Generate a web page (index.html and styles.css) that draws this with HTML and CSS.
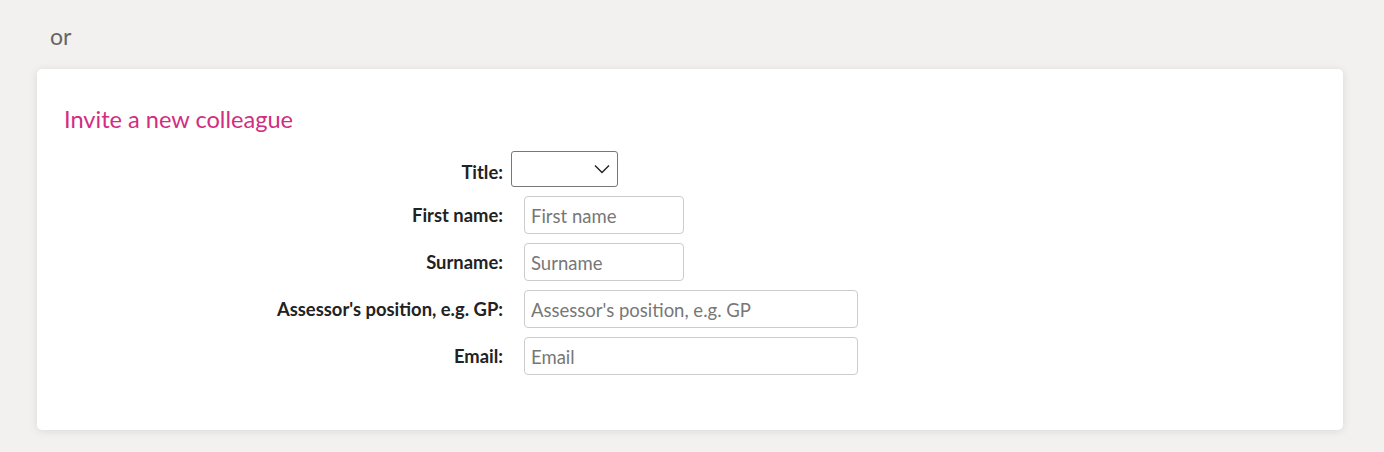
FILE: index.html
```html
<!DOCTYPE html>
<html lang="en">
<head>
  <meta charset="UTF-8">
  <meta name="viewport" content="width=device-width, initial-scale=1.0">
  <title>Invite a new colleague</title>
  <link rel="stylesheet" href="styles.css">
</head>
<body>

<p class="or">or</p>

<div class="card">
  <h2>Invite a new colleague</h2>

  <div class="invite-form">
    <label for="title" class="title-label">Title:</label>
    <div class="select-wrap">
      <select id="title" name="title">
        <option value=""></option>
        <option>Dr</option>
        <option>Mr</option>
        <option>Mrs</option>
        <option>Ms</option>
      </select>
      <svg class="chevron" width="16" height="10" viewBox="0 0 16 10">
        <path d="M1 1.5 L8 8.5 L15 1.5" fill="none" stroke="#222" stroke-width="1.4"/>
      </svg>
    </div>

    <label for="first-name">First name:</label>
    <input type="text" id="first-name" class="short" placeholder="First name">

    <label for="surname">Surname:</label>
    <input type="text" id="surname" class="short" placeholder="Surname">

    <label for="position">Assessor's position, e.g. GP:</label>
    <input type="text" id="position" class="long" placeholder="Assessor's position, e.g. GP">

    <label for="email">Email:</label>
    <input type="email" id="email" class="long" placeholder="Email">
  </div>
</div>

</body>
</html>
```

FILE: styles.css
```css
body {
  margin: 0;
  padding: 0 41px 0 37px;
  background-color: #f2f1ef;
  font-family: Lato, "Open Sans", sans-serif;
  height: 452px;
  overflow: hidden;
}

.or {
  margin: 0;
  padding: 23px 0 0 13px;
  height: 47px;
  box-sizing: border-box;
  font-size: 23px;
  line-height: 27px;
  color: #666;
}

.card {
  background-color: white;
  border-radius: 5px;
  box-shadow: 0 1px 8px rgba(0,0,0,0.10);
  padding: 37px 27px 55px;
  margin-top: 22px;
}

h2 {
  margin: 0 0 18px;
  font-size: 23.6px;
  line-height: 27px;
  font-weight: normal;
  color: #d22d80;
}

.invite-form {
  display: grid;
  grid-template-columns: 439px auto;
  column-gap: 8px;
  row-gap: 9px;
  align-items: center;
  justify-items: start;
}

label {
  justify-self: end;
  font-weight: bold;
  font-size: 18.4px;
  color: #222;
}

.title-label {
  padding-top: 6px;
}

.select-wrap {
  position: relative;
}

select {
  display: block;
  width: 107px;
  height: 36px;
  border: 1px solid #777;
  border-radius: 3px;
  background: white;
  appearance: none;
  font-family: inherit;
  font-size: 16px;
}

.chevron {
  position: absolute;
  right: 8px;
  top: 13px;
  pointer-events: none;
}

input {
  margin-left: 13px;
  height: 38px;
  box-sizing: border-box;
  padding: 1px 6px 0;
  border: 1px solid #ccc;
  border-radius: 4px;
  font-family: inherit;
  font-size: 18.5px;
  color: #222;
}

input::placeholder {
  color: #777;
}

.short {
  width: 160px;
}

.long {
  width: 334px;
}
```
